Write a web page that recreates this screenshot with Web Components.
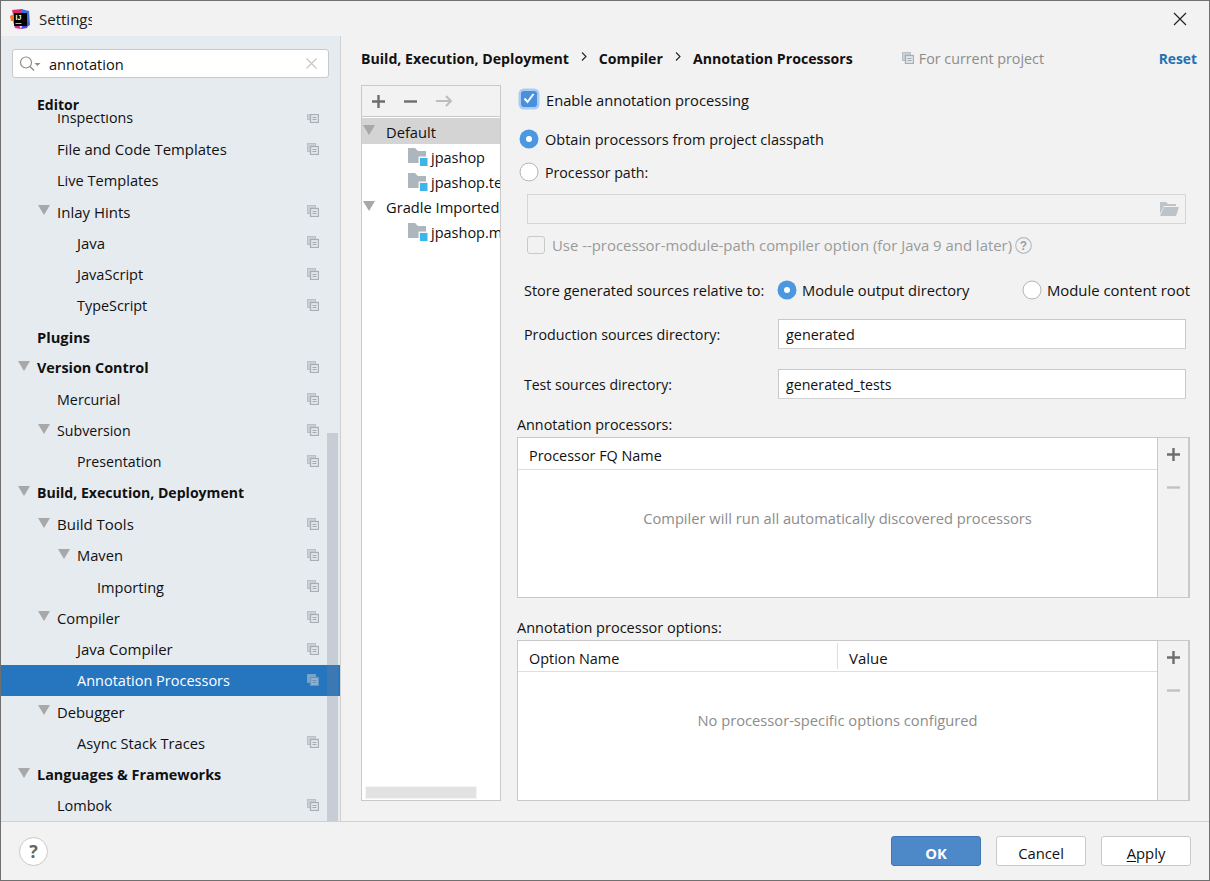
<!DOCTYPE html>
<html>
<head>
<meta charset="utf-8">
<title>Settings</title>
<style>
	html, body { margin: 0; padding: 0; background: #f2f2f2; }
	body { font: 14.7px "Open Sans", "Noto Sans", sans-serif; color: #111; }
</style>
</head>
<body>
<ij-dialog>
	<ij-titlebar slot="title">Settings</ij-titlebar>
	<ij-sidebar slot="side">
		<ij-row level="1" fs="14.3" label="Inspections" copy></ij-row>
		<ij-row level="1" fs="14.9" label="File and Code Templates" copy></ij-row>
		<ij-row level="1" fs="14.6" label="Live Templates"></ij-row>
		<ij-row level="1" fs="15" label="Inlay Hints" open copy></ij-row>
		<ij-row level="2" fs="15" label="Java" copy></ij-row>
		<ij-row level="2" fs="14.6" label="JavaScript" copy></ij-row>
		<ij-row level="2" fs="14.4" label="TypeScript" copy></ij-row>
		<ij-row level="0" fs="14.7" label="Plugins" bold></ij-row>
		<ij-row level="0" fs="14.4" label="Version Control" bold open copy></ij-row>
		<ij-row level="1" fs="14.3" label="Mercurial" copy></ij-row>
		<ij-row level="1" fs="14.2" label="Subversion" open copy></ij-row>
		<ij-row level="2" fs="14.2" label="Presentation" copy></ij-row>
		<ij-row level="0" fs="14.1" label="Build, Execution, Deployment" bold open></ij-row>
		<ij-row level="1" fs="15" label="Build Tools" open copy></ij-row>
		<ij-row level="2" fs="14.7" label="Maven" open copy></ij-row>
		<ij-row level="3" fs="14.6" label="Importing" copy></ij-row>
		<ij-row level="1" fs="14.8" label="Compiler" open copy></ij-row>
		<ij-row level="2" fs="15" label="Java Compiler" copy></ij-row>
		<ij-row level="2" fs="14.5" label="Annotation Processors" selected copy></ij-row>
		<ij-row level="1" fs="14.8" label="Debugger" open></ij-row>
		<ij-row level="2" fs="14.7" label="Async Stack Traces" copy></ij-row>
		<ij-row level="0" fs="14.4" label="Languages &amp; Frameworks" bold open></ij-row>
		<ij-row level="1" fs="14.5" label="Lombok" copy></ij-row>
	</ij-sidebar>
	<ij-breadcrumb slot="main"></ij-breadcrumb>
	<div slot="main" style="display:flex;gap:16px;align-items:flex-start">
		<ij-modules></ij-modules>
		<ij-form></ij-form>
	</div>
	<ij-footer slot="foot"></ij-footer>
</ij-dialog>

<script>
(function(){
// Shared icons
const COPY_ICON = `<svg width="12" height="12" viewBox="0 0 12 12"><rect x=".5" y=".5" width="8" height="8" fill="#c9d0d6" stroke="#b9c0c6"/><rect x="3.500" y="3.500" width="8" height="8" fill="#e4e8ec" stroke="#a6aeb6" stroke-width="1.300"/><path d="M5.500 6.500h4M5.500 8.500h4" stroke="#a0a8b0"/></svg>`;
const ARROW = `<svg width="12" height="10" viewBox="0 0 12 10"><path d="M0 0h12L6 10z" fill="#a8a8a8"/></svg>`;
const MODULE_ICON = `<svg width="20" height="18" viewBox="0 0 20 18"><path d="M0 0h7l3 3h8v12H0z" fill="#adb5bd"/><rect x="10.500" y="8.500" width="8.500" height="9.500" fill="#f5f7f8"/><rect x="12" y="10" width="7.500" height="8" fill="#3db5e6"/></svg>`;
const PLUS = c => `<svg width="13" height="13" viewBox="0 0 13 13"><path d="M5.300 0h2.400v5.300H13v2.400H7.700V13H5.300V7.700H0V5.300h5.300z" fill="${c}"/></svg>`;
const MINUS = c => `<svg width="13" height="13" viewBox="0 0 13 13"><path d="M0 5.300h13v2.400H0z" fill="${c}"/></svg>`;

class Base extends HTMLElement {
	constructor(){
		super();
		this.attachShadow({mode: 'open'});
	}
	connectedCallback(){
		this.shadowRoot.innerHTML = `<style>${this.styles()}</style>${this.markup()}`;
	}
	styles(){ return ':host{display:block}' }
	markup(){ return '<slot></slot>' }
	attr(name, fallback=''){ return this.hasAttribute(name)? this.getAttribute(name): fallback }
}

class IjDialog extends Base {
	styles(){ return `
		:host{display:flex;flex-direction:column;width:1210px;height:881px;box-sizing:border-box;
			border:1px solid #707070;background:#f2f2f2;overflow:hidden}
		.body{display:flex;height:785px;flex:none}
		.side{width:339px;flex:none;border-right:1px solid #d1d1d1;box-sizing:content-box;position:relative}
		.main{flex:1;padding:0 0 0 20px;min-width:0}
		.foot{flex:none;border-top:1px solid #d1d1d1}
	`}
	markup(){ return `
		<slot name="title"></slot>
		<div class="body">
			<div class="side"><slot name="side"></slot></div>
			<div class="main"><slot name="main"></slot></div>
		</div>
		<div class="foot"><slot name="foot"></slot></div>
	`}
}

class IjTitlebar extends Base {
	styles(){ return `
		:host{display:flex;align-items:center;height:35px;flex:none;background:#f2f2f2;padding-left:9px}
		svg.logo{flex:none;margin-right:9px}
		.t{width:53px;overflow:hidden;white-space:nowrap;font-size:15px;color:#222}
		.x{margin-left:auto;width:58px;display:flex;justify-content:center}
	`}
	markup(){ return `
		<svg class="logo" width="20" height="20" viewBox="0 0 20 20">
			<path d="M2 1 12 0l3 3-2 5-9 2z" fill="#e0286f"/>
			<path d="M11 0l8 2 1 14-5 3-4-8z" fill="#3a6fe0"/>
			<path d="M0 7l4-2 1 7-4 0z" fill="#f2782a"/>
			<path d="M3 12l5 2 3 6-6-1z" fill="#d92a8a"/>
			<path d="M13 14l6-1-2 6-6 1z" fill="#5a3fe0"/>
			<rect x="4" y="4" width="13" height="13" fill="#000"/>
			<text x="5.500" y="11" font-family="Liberation Sans" font-weight="700" font-size="7" fill="#fff">IJ</text>
			<rect x="5.500" y="14" width="6" height="1" fill="#bbb"/>
		</svg>
		<span class="t"><slot></slot></span>
		<span class="x"><svg width="14" height="14" viewBox="0 0 14 14"><path d="M1 1l12 12M13 1 1 13" stroke="#222" stroke-width="1.200" fill="none"/></svg></span>
	`}
}

class IjSidebar extends Base {
	styles(){ return `
		:host{display:flex;flex-direction:column;height:785px;background:#e6ebf0;position:relative}
		.search{margin:13px 11px 0 11px;flex:none;height:29px;box-sizing:border-box;font-size:14.6px;
			background:#fff;border:1px solid #c9c9c9;border-radius:3px;display:flex;align-items:center;padding:0 11px 0 6px}
		.search .q{flex:1;margin-left:6px;color:#111}
		.head{flex:none;height:36px;box-sizing:border-box;padding:19px 0 0 36px;font-weight:700;line-height:16px;font-size:14px}
		.list{flex:1;overflow:hidden;min-height:0}
		.scroll{margin-top:-11.7px}
		.bar{position:absolute;left:326px;width:11px;top:397px;bottom:0;background:rgba(120,130,140,.28)}
	`}
	markup(){ return `
		<div class="search">
			<svg width="24" height="18" viewBox="0 0 24 18"><circle cx="7" cy="7.500" r="5.500" fill="none" stroke="#8c8c8c" stroke-width="1.200"/><path d="M11 11.500l4 4" stroke="#8c8c8c" stroke-width="1.500"/><path d="M15.500 8h6l-3 3z" fill="#8c8c8c"/></svg>
			<span class="q">annotation</span>
			<svg width="11" height="11" viewBox="0 0 11 11"><path d="M.5.5l10 10M10.500.5l-10 10" stroke="#c4c4c4" stroke-width="1.100"/></svg>
		</div>
		<div class="head">Editor</div>
		<div class="list"><div class="scroll"><slot></slot></div></div>
		<div class="bar"></div>
	`}
}

class IjRow extends Base {
	styles(){
		const level = +this.attr('level', 0);
		return `
		:host{display:block;height:31.25px}
		.r{height:100%;display:flex;align-items:center;position:relative;padding-left:${36 + level*20}px;white-space:nowrap;
			font-size:${this.attr('fs', 14.7)}px;
			${this.hasAttribute('bold')? 'font-weight:700;': ''}
			${this.hasAttribute('selected')? 'background:#2675bf;color:#fff;': ''}}
		.a{position:absolute;left:${17 + level*20}px;top:9px;line-height:0}
		.c{position:absolute;left:306px;top:9px;line-height:0;${this.hasAttribute('selected')? 'opacity:.55;': ''}}
	`}
	markup(){ return `<div class="r">
		${this.hasAttribute('open')? `<span class="a">${ARROW}</span>`: ''}
		<span>${this.attr('label').replace(/&/g,'&amp;')}</span>
		${this.hasAttribute('copy')? `<span class="c">${COPY_ICON}</span>`: ''}
	</div>`}
}

class IjBreadcrumb extends Base {
	styles(){ return `
		:host{display:flex;align-items:center;height:44px;padding:0 12px 0 0;white-space:nowrap;margin-bottom:5px;font-size:14.15px}
		b{font-weight:700}
		.s{margin:0 12px 3px 12px;line-height:0}
		.p{margin-left:49px;color:#8c8c8c;display:flex;align-items:center;gap:5px;font-size:14.3px}
		.reset{margin-left:auto;color:#2470b3;font-weight:700;font-size:13.8px}
	`}
	markup(){
		const sep = `<span class="s"><svg width="6" height="9" viewBox="0 0 6 9"><path d="M1 .5l4 4-4 4" fill="none" stroke="#222" stroke-width="1.100"/></svg></span>`;
		return `<b>Build, Execution, Deployment</b>${sep}<b>Compiler</b>${sep}<b>Annotation Processors</b>
		<span class="p">${COPY_ICON}For current project</span><span class="reset">Reset</span>`;
	}
}

class IjModules extends Base {
	styles(){ return `
		:host{display:block;width:140px;height:716px;box-sizing:border-box;border:1px solid #c9c9c9;background:#fff;position:relative;overflow:hidden;flex:none}
		.tb{height:30px;background:#f2f2f2;border-bottom:1px solid #c9c9c9;display:flex;align-items:center;padding-left:10px;gap:19px;line-height:0}
		.rows{padding-top:1px}
		.row{height:25px;box-sizing:border-box;display:flex;align-items:center;position:relative;white-space:nowrap}
		.row.sel{background:#d4d4d4;height:26px;padding-top:1px}
		.row.top{padding-left:24px}
		.row.mod{padding:1px 0 0 46px;gap:3px;font-size:14.5px}
		.row svg{flex:none}
		.row svg.ar{position:absolute;left:1px;top:7px}
		.hs{position:absolute;left:3px;bottom:1px;width:112px;height:13px;box-sizing:border-box;background:#e2e2e2;border:1px solid #f4f4f4}
	`}
	markup(){
		const arrow = ARROW.replace('<svg ', '<svg class="ar" ');
		const mod = t => `<div class="row mod">${MODULE_ICON}<span>${t}</span></div>`;
		return `<div class="tb">${PLUS('#6e6e6e')}${MINUS('#6e6e6e')}
			<svg width="17" height="14" viewBox="0 0 17 14"><path d="M0 7h15M10 2l5 5-5 5" fill="none" stroke="#bdbdbd" stroke-width="2"/></svg>
		</div>
		<div class="rows">
			<div class="row top sel">${arrow}<span>Default</span></div>
			${mod('jpashop')}${mod('jpashop.test')}
			<div class="row top">${arrow}<span>Gradle Imported</span></div>
			${mod('jpashop.main')}
		</div>
		<div class="hs"></div>`;
	}
}

class IjCheck extends Base {
	styles(){ return `
		:host{display:flex;align-items:center;height:30px;white-space:nowrap}
		.box{box-sizing:border-box;flex:none;width:18px;height:18px;border-radius:3px;display:flex;align-items:center;justify-content:center}
		.on{background:#4a8fdb;box-shadow:0 0 0 2.500px #a9cdf2;width:16px;height:16px;margin:0 9px 3px 4px}
		.off{background:#f2f2f2;border:1px solid #c9c9c9;margin:0 7px 0 0}
		.dis{color:#9a9a9a}
	`}
	markup(){
		const on = this.hasAttribute('checked');
		return `<span class="box ${on? 'on': 'off'}">${on? '<svg width="12" height="11" viewBox="0 0 12 11"><path d="M1.500 5.500l3 3.500 6-8" fill="none" stroke="#fff" stroke-width="2"/></svg>': ''}</span>
		<span class="${on? '': 'dis'}"><slot></slot></span>`;
	}
}

class IjRadio extends Base {
	styles(){ return `
		:host{display:inline-flex;align-items:center;height:30px;white-space:nowrap;gap:6px}
		svg{flex:none}
	`}
	markup(){
		const dot = this.hasAttribute('checked')?
			'<circle cx="10" cy="10" r="9.500" fill="#4b97e0"/><circle cx="10" cy="10" r="3" fill="#fff"/>':
			'<circle cx="10" cy="10" r="9" fill="#fff" stroke="#b4b4b4"/>';
		return `<svg width="20" height="20" viewBox="0 0 20 20">${dot}</svg><slot></slot>`;
	}
}

class IjInput extends Base {
	styles(){ return `
		:host{display:flex;align-items:center;box-sizing:border-box;height:30px;background:#fff;border:1px solid #c9c9c9;border-bottom-color:#d3d3d3;padding:0 7px}
		:host([disabled]){background:#f2f2f2;border-color:#d6d6d6;justify-content:flex-end;padding:0 6px 0 0;}
	`}
	markup(){
		return this.hasAttribute('disabled')?
			`<svg width="19" height="14" viewBox="0 0 19 14"><path d="M0 0h6l2 2h8v2H4L0 12zM4 5h15l-3 9H0z" fill="#bcc3c9"/></svg>`:
			'<slot></slot>';
	}
}

class IjTable extends Base {
	styles(){
		const head = this.attr('head', 32);
		return `
		:host{display:flex;height:161px;box-sizing:border-box;border:1px solid #c9c9c9;border-right-width:2px;background:#fff}
		.t{flex:1;display:flex;flex-direction:column;min-width:0}
		.h{height:${head}px;flex:none;box-sizing:border-box;border-bottom:1px solid #dedede;display:flex;align-items:center}
		.h span{padding:4px 0 0 11px;height:26px;display:flex;align-items:center;box-sizing:border-box;font-size:14.4px}
		.h span+span{border-left:1px solid #dedede;margin-left:auto;width:320px;font-size:15px}
		.e{flex:1;display:flex;align-items:center;justify-content:center;color:#8c8c8c;padding-bottom:32px}
		.s{width:31px;flex:none;background:#f2f2f2;border-left:1px solid #c9c9c9;display:flex;flex-direction:column;align-items:center;padding-top:10px;gap:20px;box-sizing:border-box}
	`}
	markup(){
		const cols = this.attr('cols').split('|').map(c=>`<span>${c}</span>`).join('');
		return `<div class="t"><div class="h">${cols}</div><div class="e"><slot></slot></div></div>
		<div class="s">${PLUS('#6e6e6e')}${MINUS('#c2c2c2')}</div>`;
	}
}

class IjForm extends Base {
	styles(){ return `
		:host{display:block;width:673px;flex:none}
		ij-radio{display:flex}
		.lab{height:20px;display:flex;align-items:center;line-height:20px}
		.f{display:flex;align-items:center;height:30px;padding-left:7px}
		.f label{width:254px;flex:none}
		.f ij-input{width:408px}
	`}
	markup(){ return `
		<ij-check checked>Enable annotation processing</ij-check>
		<ij-radio checked style="margin:9px 0 0 2px;font-size:14.5px">Obtain processors from project classpath</ij-radio>
		<ij-radio style="margin:3px 0 0 2px;font-size:14.2px">Processor path:</ij-radio>
		<ij-input disabled style="margin:7px 0 0 10px;width:659px"></ij-input>
		<ij-check style="margin:6px 0 0 10px;font-size:14.9px"><span style="display:inline-flex;align-items:center;gap:3px">Use --processor-module-path compiler option (for Java 9 and later)<svg width="17" height="17" viewBox="0 0 17 17"><circle cx="8.500" cy="8.500" r="7.800" fill="none" stroke="#b8bdc2" stroke-width="1.200"/><text x="8.500" y="13" text-anchor="middle" font-family="Liberation Sans" font-weight="700" font-size="12" fill="#9a9fa4">?</text></svg></span>
		</ij-check>
		<div class="f" style="margin-top:15px">
			<label style="width:253px;font-size:14.5px">Store generated sources relative to:</label>
			<ij-radio checked style="width:245px;gap:5px">Module output directory</ij-radio>
			<ij-radio style="gap:5px;font-size:14.9px">Module content root</ij-radio>
		</div>
		<div class="f" style="margin-top:14px"><label style="font-size:14.3px">Production sources directory:</label><ij-input style="font-size:14.4px">generated</ij-input></div>
		<div class="f" style="margin-top:20px"><label style="font-size:14.05px">Test sources directory:</label><ij-input style="font-size:14.2px">generated_tests</ij-input></div>
		<div class="lab" style="margin-top:16px;font-size:14.35px">Annotation processors:</div>
		<ij-table style="margin-top:2px" cols="Processor FQ Name">Compiler will run all automatically discovered processors</ij-table>
		<div class="lab" style="margin-top:20px;font-size:14.5px">Annotation processor options:</div>
		<ij-table style="margin-top:2px" head="31" cols="Option Name|Value">No processor-specific options configured</ij-table>
	`}
}

class IjFooter extends Base {
	styles(){ return `
		:host{display:flex;align-items:center;height:58px;padding:0 18px 0 18px;gap:15px;background:#f2f2f2;font-size:14.8px}
		.help{width:29px;height:29px;box-sizing:border-box;border-radius:50%;background:#fff;border:1px solid #c9c9c9;display:flex;align-items:center;justify-content:center;font-weight:700;color:#666;font-size:18px;margin-right:auto}
		.b{width:90px;height:30px;box-sizing:border-box;border-radius:3px;background:#fff;border:1px solid #c9c9c9;display:flex;align-items:center;justify-content:center;padding-top:3px}
		.ok{background:#4d88c9;border-color:#3f77b5;color:#fff;font-weight:700}
		u{text-underline-offset:2px}
	`}
	markup(){ return `
		<div class="help">?</div>
		<div class="b ok">OK</div><div class="b">Cancel</div><div class="b"><span><u>A</u>pply</span></div>
	`}
}

customElements.define('ij-dialog', IjDialog);
customElements.define('ij-titlebar', IjTitlebar);
customElements.define('ij-sidebar', IjSidebar);
customElements.define('ij-row', IjRow);
customElements.define('ij-breadcrumb', IjBreadcrumb);
customElements.define('ij-modules', IjModules);
customElements.define('ij-check', IjCheck);
customElements.define('ij-radio', IjRadio);
customElements.define('ij-input', IjInput);
customElements.define('ij-table', IjTable);
customElements.define('ij-form', IjForm);
customElements.define('ij-footer', IjFooter);
})();
</script>
</body>
</html>
